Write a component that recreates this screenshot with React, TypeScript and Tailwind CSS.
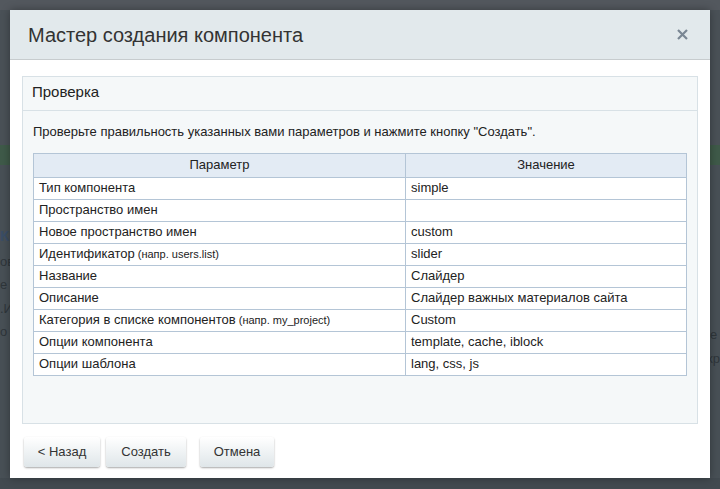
import React from "react";

const rows: { name: string; hint?: string; value: string }[] = [
  { name: "Тип компонента", value: "simple" },
  { name: "Пространство имен", value: "" },
  { name: "Новое пространство имен", value: "custom" },
  { name: "Идентификатор", hint: "(напр. users.list)", value: "slider" },
  { name: "Название", value: "Слайдер" },
  { name: "Описание", value: "Слайдер важных материалов сайта" },
  { name: "Категория в списке компонентов", hint: "(напр. my_project)", value: "Custom" },
  { name: "Опции компонента", value: "template, cache, iblock" },
  { name: "Опции шаблона", value: "lang, css, js" },
];

function WizardButton({ label, width }: { label: string; width: string }) {
  return (
    <button
      className={`h-[30px] rounded-[3px] bg-gradient-to-b from-[#ffffff] to-[#dfe6e9] text-[13px] text-[#333] shadow-[0_1px_2px_rgba(0,0,0,0.35)] ${width}`}
    >
      {label}
    </button>
  );
}

export default function App() {
  return (
    <div
      className="relative h-[489px] w-[720px] overflow-hidden bg-[#485056]"
      style={{ fontFamily: '"Liberation Sans", Arial, sans-serif' }}
    >
      {/* dimmed page behind the dialog */}
      <div className="flex h-full flex-col">
        <div className="h-[10px] bg-[#53585e]" />
        <div className="h-[135px] bg-[#4a5157]" />
        <div className="h-[20px] bg-[#3f5a49]" />
        <div className="flex flex-1 justify-between pt-[60px] text-[13px] text-[#2f363b]">
          <div className="flex flex-col gap-1">
            <span className="text-[15px] font-bold text-[#3a4d66]">Ком</span>
            <span>ов</span>
            <span>е н</span>
            <span>.И</span>
            <span>о</span>
          </div>
          <div className="flex flex-col gap-1 pt-[100px]">
            <span>le</span>
            <span>кр</span>
          </div>
        </div>
        <div className="flex h-[11px] bg-[#424a50]" />
      </div>

      {/* dialog */}
      <div className="absolute left-[10px] top-[10px] flex h-[468px] w-[700px] flex-col rounded-t-[3px] bg-white shadow-[0_0_8px_rgba(0,0,0,0.35)]">
        <div className="flex h-[50px] items-center justify-between border-b border-[#c7ccce] bg-[#e2e9ec] pl-[18px] pr-[22px]">
          <h1 className="text-[20px] text-[#333]">Мастер создания компонента</h1>
          <svg width="11" height="11" viewBox="0 0 11 11">
            <path d="M1 1 L10 10 M10 1 L1 10" stroke="#7a8794" strokeWidth="2.2" />
          </svg>
        </div>

        <div className="flex flex-1 flex-col px-[12px] pt-[16px]">
          <div className="flex h-[348px] flex-col border border-[#d8e1e6] bg-[#f5f8f9]">
            <div className="flex h-[34px] items-center border-b border-[#d8e1e6] pb-[3px] pl-[9px] text-[15px] text-[#222]">
              Проверка
            </div>
            <div className="px-[10px] pt-[11px]">
              <p className="text-[13px] text-[#222]">
                Проверьте правильность указанных вами параметров и нажмите кнопку "Создать".
              </p>
              <table className="mt-[11px] w-[654px] border-collapse bg-white text-[13px] text-[#222]">
                <thead>
                  <tr className="h-[24px] bg-[#e3ebf4]">
                    <th className="w-[372px] border border-[#b4c5d6] font-normal">Параметр</th>
                    <th className="border border-[#b4c5d6] font-normal">Значение</th>
                  </tr>
                </thead>
                <tbody>
                  {rows.map((r) => (
                    <tr key={r.name} className="h-[22px]">
                      <td className="border border-[#b4c5d6] px-[5px]">
                        {r.name}
                        {r.hint && <span className="text-[11px]"> {r.hint}</span>}
                      </td>
                      <td className="border border-[#b4c5d6] px-[5px]">{r.value}</td>
                    </tr>
                  ))}
                </tbody>
              </table>
            </div>
          </div>

          <div className="flex gap-[6px] pl-[2px] pt-[13px]">
            <WizardButton label="< Назад" width="w-[76px]" />
            <WizardButton label="Создать" width="w-[80px]" />
            <div className="ml-[8px]">
              <WizardButton label="Отмена" width="w-[74px]" />
            </div>
          </div>
        </div>
      </div>
    </div>
  );
}
